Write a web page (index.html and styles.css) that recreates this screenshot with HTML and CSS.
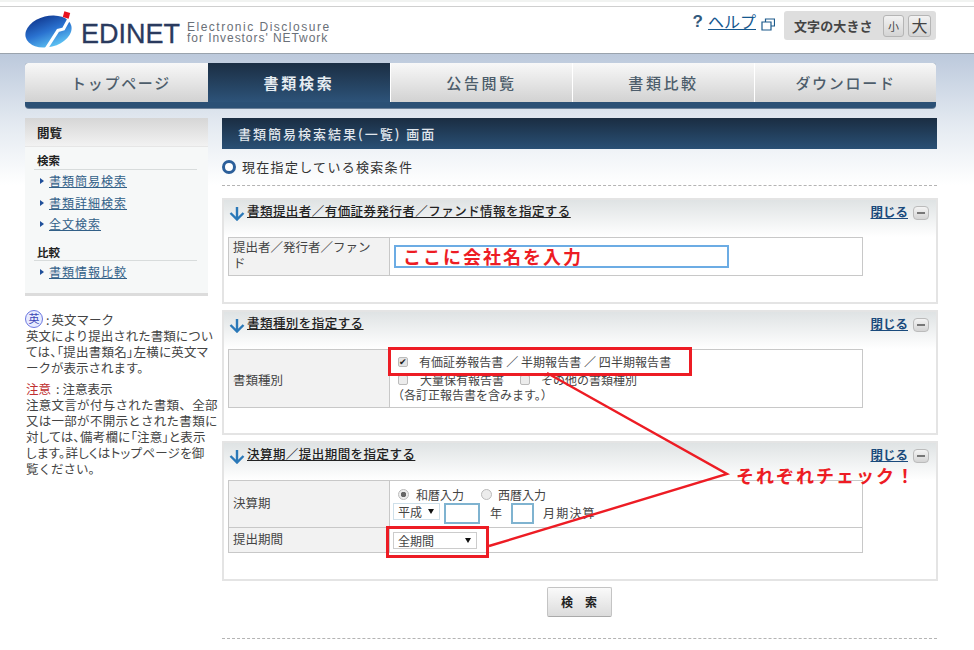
FILE: index.html
```html
<!DOCTYPE html>
<html lang="ja">
<head>
<meta charset="utf-8">
<title>EDINET 書類簡易検索</title>
<link rel="stylesheet" href="styles.css">
</head>
<body>
<div class="page">
  <div class="topstrip"></div>
  <header class="header">
    <div class="logo">
      <svg class="logo-mark" width="50" height="38" viewBox="0 0 50 38">
        <defs>
          <linearGradient id="lg" x1="0.3" y1="0" x2="0.5" y2="1">
            <stop offset="0" stop-color="#123c94"/>
            <stop offset="0.5" stop-color="#2a72d0"/>
            <stop offset="1" stop-color="#5cc0f2"/>
          </linearGradient>
        </defs>
        <ellipse cx="23.5" cy="20.5" rx="23.5" ry="15.5" transform="rotate(-14 23.5 20.5)" fill="url(#lg)"/>
        <path d="M21 38 L33 19.5 L38.5 18 L45 6" fill="none" stroke="#fff" stroke-width="3.2"/>
        <rect x="38.5" y="1" width="6" height="6" transform="rotate(15 41.5 4)" fill="#e8101c"/>
      </svg>
      <span class="logo-name">EDINET</span>
      <span class="logo-sub">Electronic Disclosure<br><span class="logo-sub2">for Investors' NETwork</span></span>
    </div>
    <div class="tools">
      <span class="q">?</span>
      <a class="help" href="#">ヘルプ</a>
      <svg class="win" width="14" height="13" viewBox="0 0 14 13"><path d="M4.5 3.5V1h9v7H10M1 4h9v8H1z" fill="#fff" stroke="#1c5a8c" stroke-width="1.2"/></svg>
      <div class="fontsize">
        <span>文字の大きさ</span>
        <b class="fs-btn small">小</b>
        <b class="fs-btn big">大</b>
      </div>
    </div>
  </header>

  <nav class="nav">
    <a class="tab kana-first">トップページ</a>
    <a class="tab active">書類検索</a>
    <a class="tab">公告閲覧</a>
    <a class="tab">書類比較</a>
    <a class="tab kana">ダウンロード</a>
  </nav>

  <div class="columns">
    <aside class="side">
      <div class="sidebox">
        <h2 class="side-head">閲覧</h2>
        <h3 class="side-label">検索</h3>
        <ul class="side-list">
          <li><a href="#">書類簡易検索</a></li>
          <li><a href="#">書類詳細検索</a></li>
          <li><a href="#">全文検索</a></li>
        </ul>
        <h3 class="side-label second">比較</h3>
        <ul class="side-list">
          <li><a href="#">書類情報比較</a></li>
        </ul>
      </div>
      <div class="notes">
        <p class="note"><span class="ei">英</span><span class="colon">:</span>英文マーク<br>英文により提出された書類につい<br><span class="tight">ては、「提出書類名」左横に英文マ</span><br>ークが表示されます。</p>
        <p class="note"><span class="warn">注意</span><span class="colon wide">:</span>注意表示<br><span class="wider">注意文言が付与された書類、全部</span><br><span class="wider">又は一部が不開示とされた書類に</span><br><span class="tight">対しては、備考欄に「注意」と表示</span><br><span class="tight">します。詳しくはトップページを御</span><br>覧ください。</p>
      </div>
    </aside>

    <main class="main">
      <h1 class="title">書類簡易検索結果(一覧) 画面</h1>
      <div class="cond"><span class="ring"></span>現在指定している検索条件</div>

      <section class="panel p1">
        <div class="panel-head">
          <svg class="arrow" width="16" height="15" viewBox="0 0 16 15"><path d="M8 1V13M1.5 7L8 13.5 14.5 7" fill="none" stroke="#2a78b8" stroke-width="2.4"/></svg>
          <a class="panel-title" href="#">書類提出者／有価証券発行者／ファンド情報を指定する</a>
          <a class="close" href="#">閉じる</a><span class="minus"></span>
        </div>
        <div class="grid">
          <div class="row r1">
            <div class="th wrap">提出者／発行者／ファンド</div>
            <div class="td"><div class="textbox"><span class="redtext">ここに会社名を入力</span></div></div>
          </div>
        </div>
      </section>

      <section class="panel p2">
        <div class="panel-head">
          <svg class="arrow" width="16" height="15" viewBox="0 0 16 15"><path d="M8 1V13M1.5 7L8 13.5 14.5 7" fill="none" stroke="#2a78b8" stroke-width="2.4"/></svg>
          <a class="panel-title" href="#">書類種別を指定する</a>
          <a class="close" href="#">閉じる</a><span class="minus"></span>
        </div>
        <div class="grid">
          <div class="row r2">
            <div class="th mid">書類種別</div>
            <div class="td stack kinds">
              <div class="line first"><span class="cb on"></span><span class="kind-main">有価証券報告書 ／ 半期報告書 ／ 四半期報告書</span></div>
              <div class="line"><span class="cb"></span><span>大量保有報告書</span><span class="cb second"></span><span>その他の書類種別</span></div>
              <div class="line note-line">（各訂正報告書を含みます。）</div>
            </div>
          </div>
        </div>
      </section>

      <section class="panel p3">
        <div class="panel-head">
          <svg class="arrow" width="16" height="15" viewBox="0 0 16 15"><path d="M8 1V13M1.5 7L8 13.5 14.5 7" fill="none" stroke="#2a78b8" stroke-width="2.4"/></svg>
          <a class="panel-title" href="#">決算期／提出期間を指定する</a>
          <a class="close" href="#">閉じる</a><span class="minus"></span>
        </div>
        <div class="grid">
          <div class="row r3">
            <div class="th">決算期</div>
            <div class="td stack">
              <div class="line radios"><span class="rd on"></span><span>和暦入力</span><span class="rd second"></span><span>西暦入力</span></div>
              <div class="line dates">
                <span class="sel era">平成<i class="tri"></i></span>
                <span class="num yr"></span><span class="lbl-y">年</span>
                <span class="num mo"></span><span class="lbl-m">月期決算</span>
              </div>
            </div>
          </div>
          <div class="row r4">
            <div class="th top">提出期間</div>
            <div class="td"><span class="sel period">全期間<i class="tri"></i></span></div>
          </div>
        </div>
      </section>

      <div class="actions"><button class="search" type="button">検　索</button></div>
      <div class="rule"></div>
    </main>
  </div>

  <svg class="marks" width="974" height="650" viewBox="0 0 974 650">
    <rect x="389.5" y="348.5" width="301" height="26" fill="none" stroke="#ed1c24" stroke-width="3"/>
    <rect x="387.5" y="527.5" width="100" height="29" fill="none" stroke="#ed1c24" stroke-width="3"/>
    <path d="M547 373L727 474L489 546" fill="none" stroke="#ed1c24" stroke-width="2.4"/>
  </svg>
  <div class="callout">それぞれチェック！</div>
</div>
</body>
</html>
```
FILE: styles.css
```css
* { box-sizing: border-box; }
html, body { margin: 0; padding: 0; }
body {
  width: 974px;
  height: 650px;
  overflow: hidden;
  background: #fff;
  color: #444;
  font-family: "Noto Sans CJK JP", "Liberation Sans", sans-serif;
  font-size: 12px;
}
a { color: inherit; }
p, h1, h2, h3, ul { margin: 0; padding: 0; }
ul { list-style: none; }

.page {
  position: relative;
  width: 974px;
  height: 650px;
  overflow: hidden;
  background: linear-gradient(#bcc9dc 54px, #e4eaf1 125px, #fff 185px);
}
.topstrip {
  height: 7px;
  background: linear-gradient(#f1f3f1 0, #f1f3f1 2px, #fff 2px, #fff 6px, #cfcfcf 6px);
}
.header {
  height: 47px;
  background: #fff;
  border-bottom: 1px solid #9aa3ad;
  display: flex;
  justify-content: space-between;
  padding: 4px 38px 0 25px;
}
.logo { display: flex; align-items: flex-start; }
.logo-mark { flex: none; }
.logo-name {
  margin: 7px 0 0 6px;
  font: 400 27px/32px "Liberation Sans", sans-serif;
  color: #2a3a5e;
  -webkit-text-stroke: .3px #2a3a5e;
}
.logo-sub {
  margin: 11px 0 0 7px;
  font: 400 12px/11px "Liberation Sans", sans-serif;
  color: #6a7078;
  letter-spacing: 1.5px;
  white-space: nowrap;
}
.logo-sub2 { letter-spacing: .95px; }

.tools { display: flex; align-items: flex-start; }
.q { font: 700 17px/22px "Liberation Sans", sans-serif; color: #32597c; margin: 0 5px 0 0; }
.help { font-size: 16px; line-height: 22px; margin-top: -1px; color: #15588f; }
.win { margin: 7px 9px 0 5px; }
.fontsize {
  width: 152px;
  height: 29px;
  background: #dedede;
  border-radius: 3px;
  display: flex;
  align-items: center;
  padding-left: 10px;
  color: #444;
  font-size: 13px;
  font-weight: 700;
}
.fontsize > span { width: 89px; letter-spacing: .1px; }
.fs-btn {
  border: 1px solid #b5b5b5;
  border-radius: 3px;
  background: linear-gradient(#f2f2f2, #d4d4d4);
  height: 22px;
  text-align: center;
  font-weight: 400;
}
.small { width: 21px; font-size: 11px; line-height: 20px; margin-right: 4px; }
.big { width: 23px; font-size: 16px; line-height: 19px; }

.nav {
  width: 911px;
  height: 45px;
  margin: 9px 0 0 25px;
  display: flex;
  padding-bottom: 6px;
  background: #2b5075;
  border-radius: 3px 3px 4px 4px;
  box-shadow: 0 1px 0 #6c8199;
}
.tab {
  flex: 0 0 182px;
  text-align: center;
  line-height: 39px;
  font-size: 15px;
  font-weight: 500;
  letter-spacing: 2.6px;
  color: #4d5d6b;
  background: linear-gradient(#f8f8f8, #d2d2d2);
  border-left: 1px solid #fff;
}
.tab.kana { letter-spacing: 1.7px; }
.tab.kana-first { flex-basis: 183px; letter-spacing: 1.7px; text-indent: 9px; }
.tab:first-child { border-left: 0; border-top-left-radius: 3px; }
.tab:last-child { border-top-right-radius: 3px; }
.tab.active {
  color: #e6ecf1;
  font-weight: 700;
  letter-spacing: 2.8px;
  background: linear-gradient(#1b2e43, #2d5379);
  border-left: 0;
}

.columns { display: flex; margin: 10px 0 0 25px; align-items: flex-start; }
.side { width: 183px; flex: none; }
.sidebox {
  height: 178px;
  background: #f6f8f8;
  border-bottom: 3px solid #dcdcdc;
  padding-bottom: 3px;
}
.side-head {
  height: 29px;
  padding-left: 12px;
  font-size: 12.5px;
  line-height: 29px;
  font-weight: 700;
  color: #222;
  background: linear-gradient(#d6d6d6, #f2f2f2);
  border-bottom: 1px solid #e6e6e6;
}
.side-label {
  margin: 6px 11px 0 9px;
  padding: 0 0 0 3px;
  height: 17px;
  line-height: 14px;
  font-size: 11.5px;
  font-weight: 700;
  color: #222;
  border-bottom: 1px solid #d8dcdc;
}
.side-label.second { margin-top: 10px; height: 16px; }
.side-list li {
  height: 21.5px;
  line-height: 21.5px;
  padding-left: 24px;
  color: #326088;
  font-size: 12px;
  letter-spacing: 1px;
  position: relative;
}
.side-list li::before {
  content: "";
  position: absolute;
  left: 15px;
  top: 8px;
  border-left: 4px solid #1f4f9a;
  border-top: 3px solid transparent;
  border-bottom: 3px solid transparent;
}

.notes { width: 196px; margin-top: 14px; margin-left: 1px; }
.note {
  font-size: 12.5px;
  line-height: 16px;
  color: #444;
  margin-bottom: 5px;
  white-space: nowrap;
}
.ei {
  display: inline-block;
  width: 18px;
  height: 18px;
  border-radius: 50%;
  border: 1.5px solid #6c78e0;
  background: #e8ecff;
  color: #3a44b4;
  font-size: 11px;
  line-height: 15px;
  text-align: center;
  vertical-align: 2px;
  margin-left: -1px;
}
.colon { margin: 0 2px 0 3px; }
.colon.wide { margin: 0 3px 0 5px; }
.warn { color: #c03030; }
.tight { font-feature-settings: "palt"; letter-spacing: .25px; }
.wider { letter-spacing: .28px; }

.main { width: 716px; margin-left: 14px; flex: none; }
.title {
  width: 715px;
  height: 31px;
  padding-left: 16px;
  font-size: 13px;
  font-weight: 500;
  line-height: 31px;
  letter-spacing: 2px;
  color: #e0e6ec;
  background: linear-gradient(#1a2d42, #2a5075);
}
.cond {
  width: 715px;
  height: 37px;
  padding-bottom: 1px;
  display: flex;
  align-items: center;
  font-size: 13px;
  letter-spacing: 1.3px;
  color: #333;
  border-bottom: 1px dashed #b4b4b4;
}
.ring {
  width: 14px;
  height: 14px;
  margin-right: 6px;
  border-radius: 50%;
  border: 3.5px solid #2c5f9a;
  background: #fff;
}
.panel {
  border: 2px solid #e4e4e4;
  background: #fff;
  margin-bottom: 6px;
}
.p1 { margin-top: 12px; height: 106px; }
.p2 { height: 125px; }
.p3 { height: 140px; }
.panel-head {
  height: 37px;
  padding: 3px 7px 0 5px;
  display: flex;
  align-items: flex-start;
  background: linear-gradient(#dfe3e4, #fff);
}
.arrow { margin-top: 3px; flex: none; margin-right: 2px; }
.panel-title {
  margin-top: -1px;
  font-size: 12.5px;
  line-height: 18px;
  color: #222;
  letter-spacing: .45px;
  font-weight: 500;
}
.close {
  margin-left: auto;
  font-size: 12.5px;
  line-height: 18px;
  font-weight: 700;
  color: #1a4a7c;
}
.minus {
  width: 16px;
  height: 14px;
  margin: 3px 0 0 5px;
  border: 1px solid #bbb;
  border-radius: 4px;
  background: linear-gradient(90deg, transparent 3px, #777 3px, #777 11px, transparent 11px) center / 100% 2px no-repeat, linear-gradient(#f4f4f4, #d4d4d4);
}
.grid {
  width: 635px;
  margin-left: 4px;
  border: 1px solid #c8c8c8;
  border-bottom: 0;
}
.row { display: flex; border-bottom: 1px solid #c8c8c8; }
.r1 { height: 38px; }
.r2 { height: 58px; }
.r3 { height: 47px; }
.r4 { height: 25px; }
.th {
  width: 161px;
  flex: none;
  padding: 1px 4px 0;
  background: #f2f2f2;
  border-right: 1px solid #c8c8c8;
  font-size: 12.5px;
  line-height: 17px;
  color: #444;
}
.th.wrap { padding-right: 12px; line-height: 16px; }
.th.mid { display: flex; align-items: center; }
.r3 .th { display: flex; align-items: center; padding-bottom: 4px; }
.r4 .th { padding-top: 2px; }
.td { flex: 1; position: relative; min-width: 0; }
.textbox {
  width: 335px;
  height: 23px;
  margin: 7px 0 0 4px;
  border: 2px solid #6cace4;
  padding-left: 7px;
}
.redtext {
  display: block;
  font-size: 18px;
  line-height: 19px;
  font-weight: 700;
  letter-spacing: 2px;
  color: #ed1c24;
  white-space: nowrap;
}
.stack { padding: 0 0 0 3px; font-size: 12px; }
.kinds { padding-top: 1px; }
.line { display: flex; align-items: center; height: 17px; white-space: nowrap; color: #444; }
.p2 .line.first { height: 20px; padding-top: 1px; }
.p2 .line { height: 17px; }
.kind-main { margin-left: -1px; letter-spacing: .06px; }
.note-line { margin-top: -2px; margin-left: -1px; }
.cb {
  width: 10px;
  height: 10px;
  margin: 0 12px 0 5px;
  border: 1px solid #bbb;
  border-radius: 2px;
  background: #ececec;
  flex: none;
}
.cb.on {
  background: #e4e4e4;
  position: relative;
}
.cb.on::after {
  content: "✔";
  position: absolute;
  left: 0;
  top: -3px;
  font-size: 9px;
  line-height: 13px;
  color: #222;
}
.cb.second { margin-left: 16px; margin-right: 11px; }
.rd {
  width: 11px;
  height: 11px;
  border-radius: 50%;
  border: 1px solid #bbb;
  background: #ececec;
  flex: none;
  margin: 0 7px 0 5px;
}
.rd.on { background: radial-gradient(circle, #666 0, #666 2.5px, #ececec 3px); }
.rd.second { margin-left: 17px; margin-right: 6px; }
.radios { height: 21px; padding-top: 6px; }
.dates { height: 21px; align-items: flex-start; margin-top: 1px; }
.sel {
  display: inline-flex;
  align-items: center;
  height: 17px;
  padding-left: 4px;
  border: 1px solid #cfe0ea;
  font-size: 12px;
  color: #444;
  position: relative;
  background: #fff;
}
.tri {
  position: absolute;
  top: 5px;
  right: 5px;
  border-top: 5px solid #111;
  border-left: 3px solid transparent;
  border-right: 3px solid transparent;
}
.era { width: 47px; }
.period { width: 84px; border-color: #ccc; margin: 4px 0 0 3px; }
.num { height: 21px; border: 2px solid #7fb3d0; background: #fff; }
.yr { width: 36px; margin-left: 4px; }
.lbl-y { margin: 1px 9px 0 10px; }
.mo { width: 23px; }
.lbl-m { margin: 1px 0 0 9px; letter-spacing: 1.2px; }
.actions { display: flex; justify-content: center; padding-right: 2px; }
.search {
  width: 65px;
  height: 30px;
  padding: 0;
  border: 1px solid #c4c4c4;
  border-bottom-color: #aaa;
  border-radius: 2px;
  background: linear-gradient(#fafafa, #dcdcdc);
  font: 700 12px/1 "Noto Sans CJK JP", sans-serif;
  color: #222;
}
.rule { width: 715px; margin-top: 21px; border-top: 1px dashed #b4b4b4; }

.marks { position: absolute; left: 0; top: 0; pointer-events: none; }
.callout {
  position: absolute;
  left: 736px;
  top: 463px;
  font-size: 18px;
  line-height: 25px;
  font-weight: 700;
  letter-spacing: 2px;
  color: #ed1c24;
  white-space: nowrap;
}
```
